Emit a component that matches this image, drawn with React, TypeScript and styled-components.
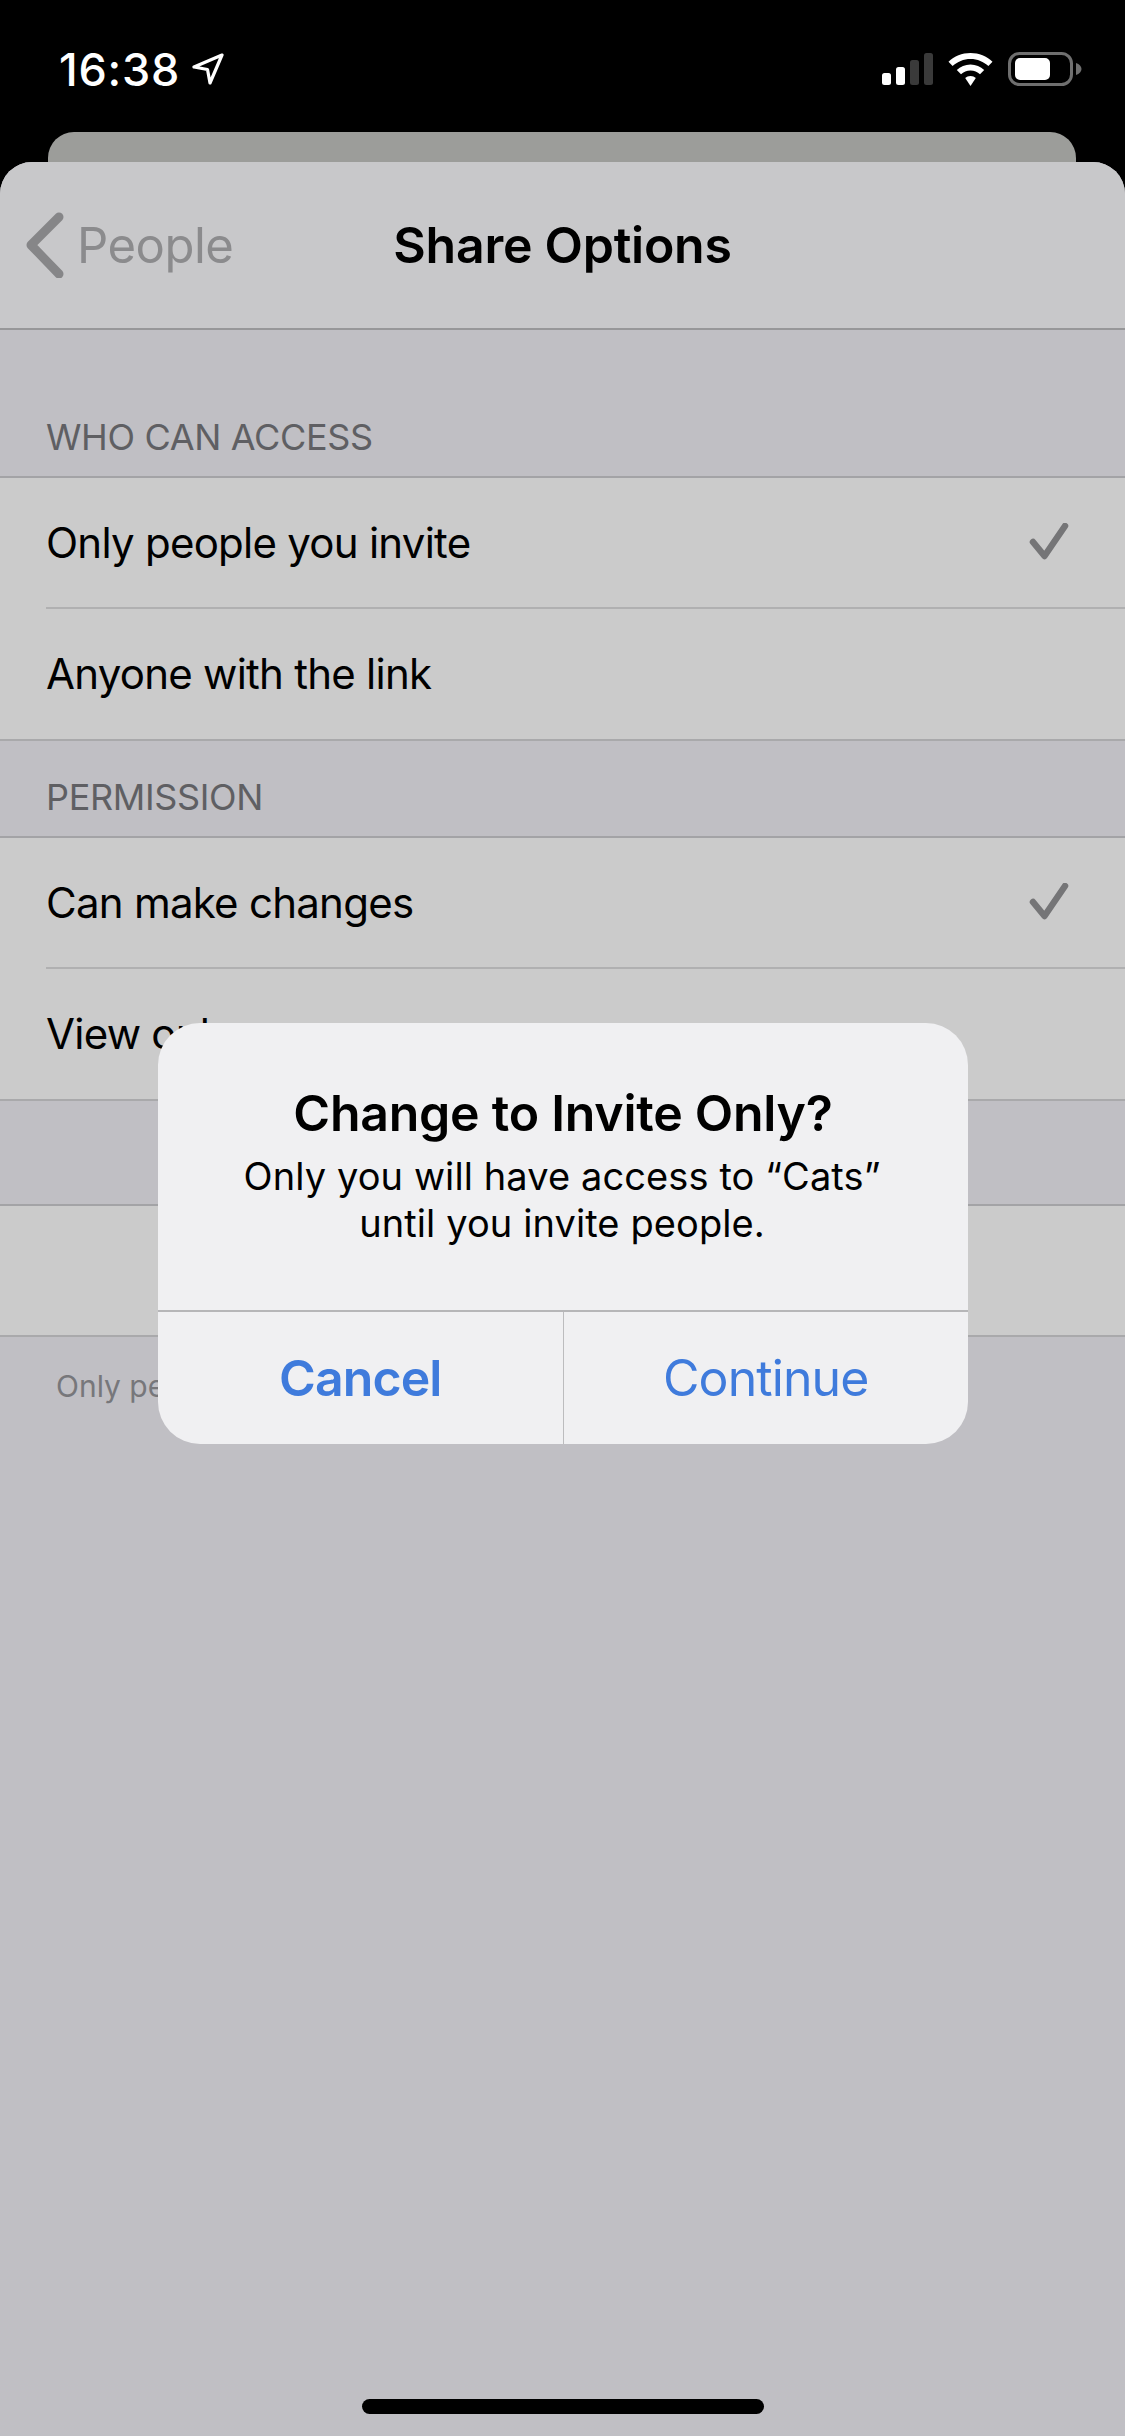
import styled, { createGlobalStyle } from 'styled-components';

const GlobalStyle = createGlobalStyle`
  html, body {
    margin: 0;
    padding: 0;
    background: #000;
  }
  body {
    font-family: Inter, "Liberation Sans", sans-serif;
    -webkit-font-smoothing: antialiased;
  }
`;

const Screen = styled.div`
  position: relative;
  display: flex;
  flex-direction: column;
  width: 1125px;
  height: 2436px;
  overflow: hidden;
  background: #000;
`;

const StatusBar = styled.div`
  display: flex;
  align-items: center;
  justify-content: space-between;
  height: 132px;
  padding: 6px 43px 0 59px;
  box-sizing: border-box;
`;

const Time = styled.div`
  display: flex;
  align-items: center;
  gap: 12px;
  color: #fff;
  font-size: 45px;
  font-weight: 500;
  letter-spacing: 0.8px;
`;

const StatusIcons = styled.div`
  display: flex;
  align-items: center;
  gap: 15px;
`;

const BackCard = styled.div`
  flex: none;
  height: 70px;
  margin: 0 49px -40px 48px;
  border-radius: 26px 26px 0 0;
  background: #9c9d9a;
`;

const Sheet = styled.div`
  position: relative;
  flex: 1;
  display: flex;
  flex-direction: column;
  border-radius: 32px 32px 0 0;
  background: #c0bfc4;
  overflow: hidden;
`;

const NavBar = styled.div`
  position: relative;
  display: flex;
  align-items: center;
  justify-content: center;
  flex: none;
  height: 168px;
  box-sizing: border-box;
  border-bottom: 2px solid #979799;
  background: #c8c8ca;
`;

const BackButton = styled.div`
  position: absolute;
  left: 26px;
  top: 50px;
  display: flex;
  align-items: center;
  gap: 13px;
  color: #8b8b8d;
  font-size: 49px;
  letter-spacing: -0.5px;
`;

const NavTitle = styled.div`
  color: #000;
  font-size: 50px;
  font-weight: 600;
  letter-spacing: -0.25px;
`;

const SectionLabel = styled.div<{ $height: number }>`
  display: flex;
  align-items: flex-end;
  height: ${(p) => p.$height}px;
  box-sizing: border-box;
  padding: 0 46px 19px;
  color: #5f5f63;
  font-size: 36px;
  letter-spacing: -0.35px;
  line-height: 40px;
`;

const Group = styled.div`
  border-top: 2px solid #a3a3a6;
  border-bottom: 2px solid #a9a9ab;
  background: #cbcbcb;
`;

const Row = styled.div`
  display: flex;
  align-items: center;
  justify-content: space-between;
  height: 129px;
  box-sizing: border-box;
  margin-left: 46px;
  padding: 0 56px 1px 0;
  color: #000;
  font-size: 42px;
  letter-spacing: -0.75px;

  & + & {
    height: 132px;
    border-top: 2px solid #b0b0b1;
  }
`;

const Footer = styled.div`
  padding: 31px 56px;
  color: #77777b;
  font-size: 30px;
  line-height: 36px;
`;

const Alert = styled.div`
  position: absolute;
  left: 158px;
  top: 1023px;
  width: 810px;
  height: 421px;
  display: flex;
  flex-direction: column;
  border-radius: 42px;
  background: #f0f0f2;
  overflow: hidden;
`;

const AlertBody = styled.div`
  flex: none;
  height: 287px;
  box-sizing: border-box;
  padding-top: 60px;
  text-align: center;
  color: #000;
`;

const AlertTitle = styled.div`
  font-size: 50px;
  font-weight: 600;
  line-height: 60px;
  letter-spacing: -0.25px;
`;

const AlertMessage = styled.div`
  margin-top: 10px;
  padding-right: 2px;
  font-size: 38px;
  line-height: 47px;
  letter-spacing: 0.1px;
`;

const AlertActions = styled.div`
  flex: 1;
  display: flex;
  border-top: 2px solid #b6b6b8;
`;

const AlertButton = styled.div<{ $bold?: boolean }>`
  flex: 1;
  display: flex;
  align-items: center;
  justify-content: center;
  color: #3f7bdc;
  font-size: 50px;
  font-weight: ${(p) => (p.$bold ? 600 : 400)};
  letter-spacing: -0.9px;

  & + & {
    border-left: 1px solid #bcbcbe;
  }
`;

const HomeIndicator = styled.div`
  position: absolute;
  left: 362px;
  bottom: 22px;
  width: 402px;
  height: 15px;
  border-radius: 8px;
  background: #000;
`;

function LocationArrow() {
  return (
    <svg width="32" height="32" viewBox="0 0 32 32" fill="none">
      <path
        d="M30 2 L2 14 L15.5 16.5 L18 30 Z"
        stroke="#fff"
        strokeWidth="3.2"
        strokeLinejoin="round"
      />
    </svg>
  );
}

function SignalBars() {
  return (
    <svg width="51" height="32" viewBox="0 0 51 32">
      <rect x="0" y="20" width="9" height="12" rx="2.5" fill="#fff" />
      <rect x="14" y="14" width="9" height="18" rx="2.5" fill="#fff" />
      <rect x="28" y="7" width="9" height="25" rx="2.5" fill="#3a3a3a" />
      <rect x="42" y="0" width="9" height="32" rx="2.5" fill="#3a3a3a" />
    </svg>
  );
}

function WifiIcon() {
  return (
    <svg width="45" height="33" viewBox="0 0 45 33" fill="#fff">
      <path d="M22.5 0 C14 0 6.3 3.3 0.5 8.8 L4.6 13 C9.3 8.6 15.6 5.9 22.5 5.9 C29.4 5.9 35.7 8.6 40.4 13 L44.5 8.8 C38.7 3.3 31 0 22.5 0 Z" />
      <path d="M22.5 11.4 C17.2 11.4 12.4 13.5 8.8 16.9 L13 21.2 C15.5 18.9 18.8 17.4 22.5 17.4 C26.2 17.4 29.5 18.9 32 21.2 L36.2 16.9 C32.6 13.5 27.8 11.4 22.5 11.4 Z" />
      <path d="M22.5 23 C20.3 23 18.6 23.8 17.2 25.1 L22.5 33 L27.8 25.1 C26.4 23.8 24.7 23 22.5 23 Z" />
    </svg>
  );
}

function BatteryIcon() {
  return (
    <svg width="74" height="34" viewBox="0 0 74 34">
      <rect x="1.5" y="1.5" width="62" height="31" rx="10" fill="none" stroke="#6f6f6f" strokeWidth="3" />
      <rect x="7" y="6" width="35" height="22" rx="5" fill="#fff" />
      <path d="M68 11 C71.5 12 73.5 14.5 73.5 17 C73.5 19.5 71.5 22 68 23 Z" fill="#6f6f6f" />
    </svg>
  );
}

function ChevronLeft() {
  return (
    <svg width="38" height="66" viewBox="0 0 38 66" fill="none">
      <path
        d="M33 5 L5 33 L33 62"
        stroke="#868688"
        strokeWidth="9"
        strokeLinecap="round"
        strokeLinejoin="round"
      />
    </svg>
  );
}

function Check() {
  return (
    <svg width="40" height="38" viewBox="0 0 40 38" fill="none">
      <path
        d="M4 19 L15.5 33 L36 3"
        stroke="#757577"
        strokeWidth="6.5"
        strokeLinecap="round"
        strokeLinejoin="round"
      />
    </svg>
  );
}

export default function App() {
  return (
    <Screen>
      <GlobalStyle />
      <StatusBar>
        <Time>
          16:38
          <LocationArrow />
        </Time>
        <StatusIcons>
          <SignalBars />
          <WifiIcon />
          <BatteryIcon />
        </StatusIcons>
      </StatusBar>
      <BackCard />
      <Sheet>
        <NavBar>
          <BackButton>
            <ChevronLeft />
            People
          </BackButton>
          <NavTitle>Share Options</NavTitle>
        </NavBar>
        <SectionLabel $height={146}>WHO CAN ACCESS</SectionLabel>
        <Group>
          <Row>
            Only people you invite
            <Check />
          </Row>
          <Row>Anyone with the link</Row>
        </Group>
        <SectionLabel $height={95}>PERMISSION</SectionLabel>
        <Group>
          <Row>
            Can make changes
            <Check />
          </Row>
          <Row>View only</Row>
        </Group>
        <SectionLabel $height={103} />
        <Group>
          <Row />
        </Group>
        <Footer>Only people you invite can access.</Footer>
      </Sheet>
      <Alert>
        <AlertBody>
          <AlertTitle>Change to Invite Only?</AlertTitle>
          <AlertMessage>
            Only you will have access to “Cats”
            <br />
            until you invite people.
          </AlertMessage>
        </AlertBody>
        <AlertActions>
          <AlertButton $bold>Cancel</AlertButton>
          <AlertButton>Continue</AlertButton>
        </AlertActions>
      </Alert>
      <HomeIndicator />
    </Screen>
  );
}
